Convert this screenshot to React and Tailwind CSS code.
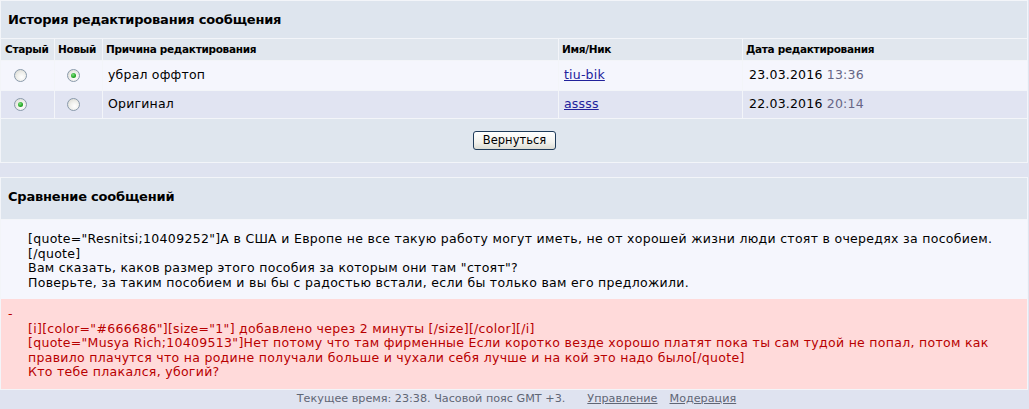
import { useState } from "react";

function Radio({ checked, onClick }) {
  return (
    <span
      onClick={onClick}
      className="inline-flex items-center justify-center w-[13px] h-[13px] rounded-full border border-[#8a9aab] bg-[radial-gradient(circle_at_60%_65%,#ffffff_0%,#f0f0ec_45%,#d4d4cc_100%)] cursor-pointer"
    >
      {checked && (
        <span className="block w-[5px] h-[5px] rounded-full bg-[radial-gradient(circle_at_40%_35%,#7fe07f_0%,#23a523_60%,#138013_100%)]" />
      )}
    </span>
  );
}

const edits = [
  { reason: "убрал оффтоп", user: "tiu-bik", date: "23.03.2016", time: "13:36", bg: "bg-[#f5f6fd]" },
  { reason: "Оригинал", user: "assss", date: "22.03.2016", time: "20:14", bg: "bg-[#e1e4f2]" },
];

export default function App() {
  const [oldSel, setOldSel] = useState(1);
  const [newSel, setNewSel] = useState(0);

  return (
    <div className="w-[1029px] h-[409px] bg-[#dfe3f0] font-['DejaVu_Sans',Verdana,sans-serif] text-black overflow-hidden">
      {/* История */}
      <div className="w-[1028px] border border-[#f3f5f9] bg-[#f3f5f9]">
        <div className="h-[37px] bg-[#dee5ee] flex items-center pl-[7px] text-[13px] font-bold tracking-[-0.2px]">
          История редактирования сообщения
        </div>
        <div className="grid grid-cols-[53px_47px_455px_183px_1fr] gap-px mt-px">
          <div className="h-[21px] bg-[#e1e7ee] flex items-center pl-[4px] text-[10.5px] font-bold tracking-[-0.3px]">Старый</div>
          <div className="h-[21px] bg-[#e1e7ee] flex items-center pl-[3px] text-[10.5px] font-bold tracking-[-0.3px]">Новый</div>
          <div className="h-[21px] bg-[#e1e7ee] flex items-center pl-[3px] text-[10.5px] font-bold tracking-[-0.3px]">Причина редактирования</div>
          <div className="h-[21px] bg-[#e1e7ee] flex items-center pl-[3px] text-[10.5px] font-bold tracking-[-0.3px]">Имя/Ник</div>
          <div className="h-[21px] bg-[#e1e7ee] flex items-center pl-[3px] text-[10.5px] font-bold tracking-[-0.3px]">Дата редактирования</div>

          {edits.map((e, i) => (
            <div key={i} className="contents">
              <div className={`${e.bg} ${i === 0 ? "h-[29px]" : "h-[27px]"} flex items-center pl-[13px]`}>
                <Radio checked={oldSel === i} onClick={() => setOldSel(i)} />
              </div>
              <div className={`${e.bg} flex items-center pl-[12px]`}>
                <Radio checked={newSel === i} onClick={() => setNewSel(i)} />
              </div>
              <div className={`${e.bg} flex items-center pl-[5px] text-[12.5px] tracking-[0.2px]`}>{e.reason}</div>
              <div className={`${e.bg} flex items-center pl-[5px] text-[12.5px] tracking-[0.2px]`}>
                <a href="#" className="text-[#22229c] underline">{e.user}</a>
              </div>
              <div className={`${e.bg} flex items-center pl-[6px] text-[12.5px] tracking-[0.2px]`}>
                {e.date}&nbsp;<span className="text-[#666686]">{e.time}</span>
              </div>
            </div>
          ))}
        </div>
        <div className="h-[43px] bg-[#dfe6ee] mt-px flex items-center justify-center pl-[1px]">
          <button className="h-[19px] w-[83px] rounded-[3px] border border-[#1f3b5a] bg-[linear-gradient(#ffffff,#f2f2ee_60%,#dcdcd4)] text-[11.5px] leading-none">
            Вернуться
          </button>
        </div>
      </div>

      {/* Сравнение */}
      <div className="mt-[14px] w-[1028px] border border-[#f3f5f9] bg-[#f3f5f9]">
        <div className="h-[41px] bg-[#dee5ee] flex items-start pt-[9px] pl-[7px] text-[13px] font-bold tracking-[-0.2px]">
          Сравнение сообщений
        </div>
        <div className="mt-px bg-[#f5f6fd] pl-[27px] pt-[12px] pb-[9px] text-[12.5px] tracking-[0.3px] leading-[14.5px]">
          <div>[quote="Resnitsi;10409252"]А в США и Европе не все такую работу могут иметь, не от хорошей жизни люди стоят в очередях за пособием.</div>
          <div>[/quote]</div>
          <div>Вам сказать, каков размер этого пособия за которым они там "стоят"?</div>
          <div>Поверьте, за таким пособием и вы бы с радостью встали, если бы только вам его предложили.</div>
        </div>
        <div className="bg-[#ffdada] text-[#b80000] text-[12.5px] tracking-[0.3px] leading-[14.5px] pl-[7px] pt-[8px] pb-[9px]">
          <div>-</div>
          <div className="pl-[20px]">
            <div>[i][color="#666686"][size="1"] добавлено через 2 минуты [/size][/color][/i]</div>
            <div>[quote="Musya Rich;10409513"]Нет потому что там фирменные Если коротко везде хорошо платят пока ты сам тудой не попал, потом как</div>
            <div>правило плачутся что на родине получали больше и чухали себя лучше и на кой это надо было[/quote]</div>
            <div>Кто тебе плакался, убогий?</div>
          </div>
        </div>
      </div>

      <div className="flex justify-center pt-[2px] pl-[4px] text-[11.2px] leading-[14px] text-[#5f6675]">
        <span>Текущее время: 23:38. Часовой пояс GMT +3.</span>
        <a href="#" className="underline ml-[22px]">Управление</a>
        <a href="#" className="underline ml-[12px]">Модерация</a>
      </div>
    </div>
  );
}
